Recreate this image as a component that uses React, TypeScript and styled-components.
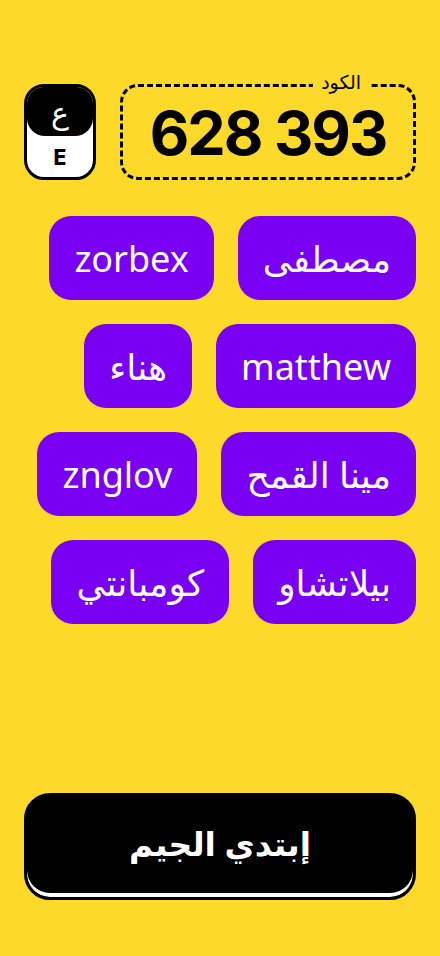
import React from "react";
import styled, { createGlobalStyle } from "styled-components";

const GlobalStyle = createGlobalStyle`
  html, body { margin: 0; padding: 0; background: #FDD92A; }
  body { font-family: "Noto Sans", "Open Sans", "DejaVu Sans", sans-serif; }
  * { box-sizing: border-box; }
`;

const Page = styled.div`
  direction: rtl;
  min-height: 956px;
  background: #FDD92A;
  display: flex;
  flex-direction: column;
  padding: 84px 24px 56px;
`;

const Header = styled.div`
  display: flex;
  gap: 24px;
  height: 96px;
`;

const CodeBox = styled.div`
  position: relative;
  flex: 1;
  border: 3px dashed #000;
  border-radius: 18px;
  display: flex;
  align-items: center;
  justify-content: center;
`;

const CodeLabel = styled.span`
  position: absolute;
  top: -18px;
  right: 44px;
  padding: 0 8px;
  background: #FDD92A;
  font-size: 19px;
  line-height: 26px;
  color: #000;
`;

const CodeValue = styled.div`
  direction: ltr;
  font-family: Inter, "Liberation Sans", sans-serif;
  font-weight: 700;
  font-size: 61px;
  letter-spacing: -2px;
  color: #000;
  line-height: 1;
  padding-top: 2px;
`;

const LangToggle = styled.div`
  width: 72px;
  border: 3px solid #000;
  border-radius: 20px;
  background: #fff;
  overflow: hidden;
  display: flex;
  flex-direction: column;
`;

const LangTop = styled.div`
  height: 49px;
  background: #000;
  color: #fff;
  border-radius: 0 0 18px 18px;
  display: flex;
  align-items: center;
  justify-content: center;
  font-size: 30px;
  padding-top: 2px;
`;

const LangBottom = styled.div`
  flex: 1;
  display: flex;
  align-items: center;
  justify-content: center;
  font-family: Inter, "Liberation Sans", sans-serif;
  font-weight: 800;
  font-size: 21px;
  color: #000;
  padding-top: 2px;
`;

const Players = styled.div`
  flex: 1;
  display: flex;
  flex-wrap: wrap;
  align-content: flex-start;
  gap: 24px;
  margin-top: 36px;
`;

const Chip = styled.div`
  height: 84px;
  padding: 0 25px;
  border-radius: 22px;
  background: #7A00F4;
  color: #fff;
  font-size: 36px;
  display: flex;
  align-items: center;
  white-space: nowrap;
`;

const StartButton = styled.button`
  height: 107px;
  width: 100%;
  border: 3px solid #000;
  border-radius: 26px;
  background: #000;
  color: #fff;
  box-shadow: inset 0 -4px 0 #fff;
  font-family: "Noto Sans", "DejaVu Sans", sans-serif;
  font-weight: 700;
  font-size: 33px;
  display: flex;
  align-items: center;
  justify-content: center;
  padding: 0 0 6px;
  cursor: pointer;
`;

const players = ["مصطفى", "zorbex", "matthew", "هناء", "مينا القمح", "znglov", "بيلاتشاو", "كومبانتي"];

export default function App() {
  return (
    <>
      <GlobalStyle />
      <Page>
        <Header>
          <CodeBox>
            <CodeLabel>الكود</CodeLabel>
            <CodeValue>628 393</CodeValue>
          </CodeBox>
          <LangToggle>
            <LangTop>ع</LangTop>
            <LangBottom>E</LangBottom>
          </LangToggle>
        </Header>
        <Players>
          {players.map((p) => (
            <Chip key={p}>{p}</Chip>
          ))}
        </Players>
        <StartButton>إبتدي الجيم</StartButton>
      </Page>
    </>
  );
}
